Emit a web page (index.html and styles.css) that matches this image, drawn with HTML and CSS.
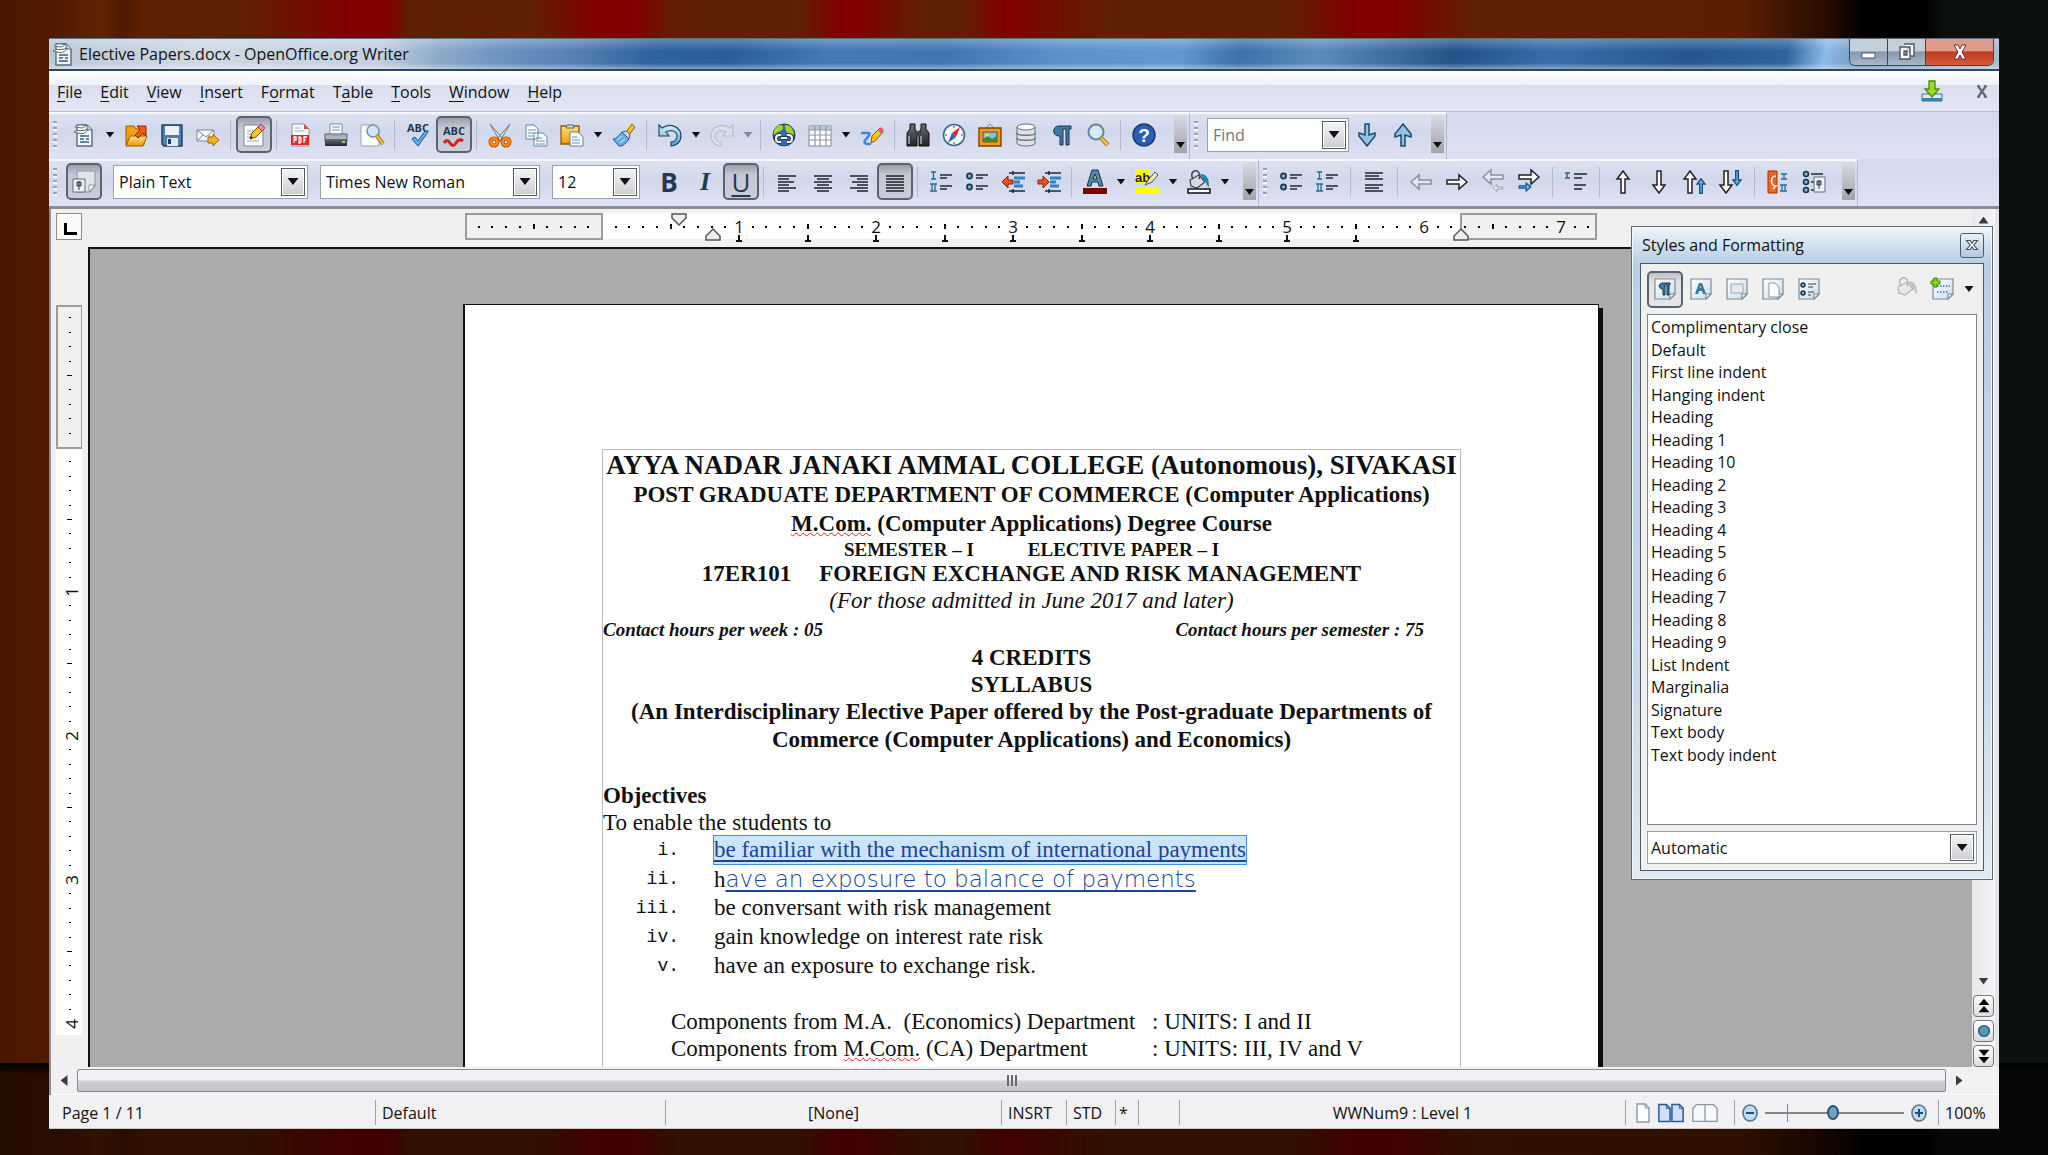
FILE: index.html
```html
<!DOCTYPE html>
<html lang="en">
<head>
    <meta charset="UTF-8">
    <meta name="viewport" content="width=device-width, initial-scale=1.0">
    <title>Elective Papers.docx - OpenOffice.org Writer</title>
    <link rel="stylesheet" href="styles.css">
</head>
<body>
    <!-- Shared icons and gradients -->
    <svg class="sprite" aria-hidden="true">
        <defs>
            <linearGradient id="gBlue" x1="0" y1="0" x2="0" y2="1"><stop offset="0" stop-color="#d8eefa"/><stop offset="1" stop-color="#5a9ccc"/></linearGradient>
            <linearGradient id="gGold" x1="0" y1="0" x2="0" y2="1"><stop offset="0" stop-color="#ffe27a"/><stop offset="1" stop-color="#f0980c"/></linearGradient>
            <linearGradient id="gPaper" x1="0" y1="0" x2="1" y2="1"><stop offset="0" stop-color="#fff"/><stop offset="1" stop-color="#c9dbe8"/></linearGradient>
            <linearGradient id="gDark" x1="0" y1="0" x2="0" y2="1"><stop offset="0" stop-color="#6b6f75"/><stop offset="1" stop-color="#22262b"/></linearGradient>
        </defs>
        <symbol id="i-writer" viewBox="0 0 24 24">
            <path d="M5 2h10l5 5v16H5z" fill="#f3f7fa" stroke="#566b7c" stroke-width="1.4"/>
            <path d="M15 2v5h5" fill="#cfdbe4" stroke="#566b7c"/>
            <path d="M3 4c4-4 7-1 11-2-3 5-7 2-11 2zM2 9c4-3 8 0 14-3-3 7-9 4-14 3z" fill="#fff" stroke="#56636e"/>
            <path d="M8 13h9M8 16h4M8 19h9M14 16h3" stroke="#2c5f8e" stroke-width="1.6"/>
        </symbol>
        <symbol id="i-bullets" viewBox="0 0 24 24">
            <circle cx="4.500" cy="6" r="2.600" fill="#7db0cf" stroke="#16384f" stroke-width="1.6"/>
            <circle cx="4.500" cy="17" r="2.600" fill="#7db0cf" stroke="#16384f" stroke-width="1.6"/>
            <path d="M11 5h12M11 8h7M11 16h12M11 19h7" stroke="#1c2a38" stroke-width="1.5"/>
        </symbol>
        <symbol id="i-numbers" viewBox="0 0 24 24">
            <path d="M2 2h5M2 9h5M4.500 2v7M1 14h7M1 21h7M3 14v7M6 14v7" stroke="#2c6a94" stroke-width="1.3"/>
            <path d="M11 5h12M11 8h7M11 16h12M11 19h7" stroke="#1c2a38" stroke-width="1.5"/>
        </symbol>
        <symbol id="i-paint" viewBox="0 0 24 24">
            <path d="M3 10l9-5 6 7-8 6-6-2z" fill="#d7dbe0" stroke="#3f4850" stroke-width="1.3"/>
            <path d="M6 9c-3-5 0-9 4-8 3 1 3 5 2 8" fill="none" stroke="#3f4850" stroke-width="1.5"/>
            <path d="M13 4c8 0 9 6 9 13-3-1-2-5-5-7z" fill="#1f83b8"/>
        </symbol>
        <symbol id="i-page" viewBox="0 0 24 24">
            <path d="M2 2h20v15l-5 5H2z" fill="url(#gPaper)" stroke="#7d8c9a" stroke-width="1.2"/>
            <path d="M22 17h-5v5z" fill="#fff" stroke="#7d8c9a" stroke-width="1.2"/>
        </symbol>
        <symbol id="i-left" viewBox="0 0 24 24"><path d="M2 12l8-7v5h12v4H10v5z"/></symbol>
        <symbol id="i-right" viewBox="0 0 24 24"><path d="M22 12l-8-7v5H2v4h12v5z"/></symbol>
        <symbol id="i-up" viewBox="0 0 24 24"><path d="M12 1l6 8h-4v14h-4V9H6z"/></symbol>
        <symbol id="i-down" viewBox="0 0 24 24"><path d="M12 23l6-8h-4V1h-4v14H6z"/></symbol>
        <symbol id="i-find" viewBox="0 0 24 24"><path d="M12 1l8 10v3l-6-2v11h-4V12l-6 2v-3z"/></symbol>
    </svg>

    <div class="window">
        <header class="titlebar">
            <svg class="icon"><use href="#i-writer"/></svg>
            <h1>Elective Papers.docx - OpenOffice.org Writer</h1>
            <div class="window-buttons">
                <button class="win-btn" aria-label="Minimize"><svg viewBox="0 0 24 20"><rect x="5" y="11" width="13" height="5" fill="#fff" stroke="#4c586a"/></svg></button>
                <button class="win-btn" aria-label="Restore"><svg viewBox="0 0 24 20"><path d="M9 2h10v12h-3M5 5h10v12H5zM9 9h3v4H9z" fill="#fff" stroke="#4c586a" stroke-width="1.4" fill-rule="evenodd"/></svg></button>
                <button class="win-btn win-close" aria-label="Close"><svg viewBox="0 0 24 20"><path d="M6 3h4l2 4 2-4h4l-4 7 4 7h-4l-2-4-2 4H6l4-7z" fill="#fff" stroke="#6b3030"/></svg></button>
            </div>
        </header>

        <nav class="menubar">
            <a href="#"><u>F</u>ile</a>
            <a href="#"><u>E</u>dit</a>
            <a href="#"><u>V</u>iew</a>
            <a href="#"><u>I</u>nsert</a>
            <a href="#">F<u>o</u>rmat</a>
            <a href="#">T<u>a</u>ble</a>
            <a href="#"><u>T</u>ools</a>
            <a href="#"><u>W</u>indow</a>
            <a href="#"><u>H</u>elp</a>
            <button class="menu-icon update" aria-label="Update"><svg class="icon" viewBox="0 0 24 24"><path d="M2 14h20v7H2z" fill="#dcecf8" stroke="#3d6d9c"/><path d="M2 18h20v3H2z" fill="#3d7fb4"/><path d="M9 1h6v8h4l-7 8-7-8h4z" fill="#9bdc1c" stroke="#4b8c0a" stroke-width="1.3"/></svg></button>
            <button class="menu-icon" aria-label="Close document"><svg class="icon" viewBox="0 0 24 24"><path d="M8 6l8 11M16 6L8 17" stroke="#5d6a80" stroke-width="2.2"/><path d="M7 6h3M14 6h3M7 17h3M14 17h3" stroke="#5d6a80" stroke-width="1.5"/></svg></button>
        </nav>

        <div class="toolbar-row">
            <div class="toolbar main-bar">
                <span class="grip"></span>
                <button class="tool" aria-label="New"><svg class="icon"><use href="#i-writer"/></svg></button>
                <button class="drop" aria-label="New options"></button>
                <button class="tool" aria-label="Open"><svg class="icon" viewBox="0 0 24 24"><path d="M2 3h8l2 3h8v16H2z" fill="#f0a010" stroke="#9c5a00"/><path d="M2 23l4-10h17l-4 10z" fill="url(#gGold)" stroke="#9c5a00"/><path d="M11 12l5-5-3-4h9v10l-3-3-5 5z" fill="#f4581c" stroke="#8c2400"/></svg></button>
                <button class="tool" aria-label="Save"><svg class="icon" viewBox="0 0 24 24"><path d="M2 2h20v21H4l-2-2z" fill="#4a7fae" stroke="#1c3e60" stroke-width="1.4"/><path d="M5 3h14v9H5z" fill="#eef4f9"/><path d="M7 15h11v8H7z" fill="#e4e9ee"/><path d="M8 16h3v5H8z" fill="#1c3e60"/></svg></button>
                <button class="tool" aria-label="E-mail"><svg class="icon" viewBox="0 0 24 24"><path d="M1 7h17v11H1z" fill="#f4f7fa" stroke="#7c8893"/><path d="M1 7l9 7 8-7M1 18l6-6M18 18l-5-6" fill="none" stroke="#7c8893"/><path d="M12 14h5v-3l6 6-6 6v-3h-5z" fill="#f6b21c" stroke="#a86a00"/></svg></button>
                <span class="sep"></span>
                <button class="tool pressed" aria-label="Edit file"><svg class="icon" viewBox="0 0 24 24"><path d="M2 2h15l4 4v17H2z" fill="#fafbfc" stroke="#7c8893"/><path d="M5 8h9M5 11h7M5 14h6M5 18h12" stroke="#9aa6b0"/><path d="M8 16l2-6 8-8 4 4-8 8z" fill="#fcc51c" stroke="#6e5200"/><path d="M16 4l3-3 4 4-3 3z" fill="#f08aa0" stroke="#9c4058"/><path d="M8 16l1-3 2 2z" fill="#222"/></svg></button>
                <span class="sep"></span>
                <button class="tool" aria-label="Export as PDF"><svg class="icon" viewBox="0 0 24 24"><path d="M4 1h12l5 5v17H4z" fill="#f5f8fa" stroke="#8895a0"/><path d="M16 1v5h5z" fill="#e0484c"/><path d="M7 5h6M7 8h9" stroke="#a8b4be"/><path d="M3 12h18v10H3z" fill="#e02828"/><path d="M6 20v-6h2v3H6M11 14v6h1l1-1v-4l-1-1zM16 20v-6h3M16 17h2" fill="none" stroke="#fff" stroke-width="1.3"/></svg></button>
                <button class="tool" aria-label="Print"><svg class="icon" viewBox="0 0 24 24"><path d="M6 1h12v11H6z" fill="#fff" stroke="#7c8893"/><path d="M8 4h8M8 7h8" stroke="#4a9cc8"/><path d="M1 11h22v8H1z" fill="#aeb6bd" stroke="#59636c"/><path d="M1 16h22v7H1z" fill="url(#gDark)"/><path d="M7 10h10v3H7z" fill="#8aa0b0"/><path d="M18 19h3" stroke="#8fe04c" stroke-width="2"/></svg></button>
                <button class="tool" aria-label="Page preview"><svg class="icon" viewBox="0 0 24 24"><path d="M1 2h14l4 4v17H1z" fill="#fafbfc" stroke="#9aa6b0"/><circle cx="13" cy="8" r="6" fill="#cfe6f5" stroke="#7794a8" stroke-width="1.5"/><path d="M17 13l6 8" stroke="#b07a10" stroke-width="4"/><path d="M17 13l6 8" stroke="#f7c544" stroke-width="2"/></svg></button>
                <span class="sep"></span>
                <button class="tool" aria-label="Spelling and grammar"><svg class="icon" viewBox="0 0 24 24"><text class="abc" x="12" y="9">ABC</text><path d="M6 16l6 7L22 9l-3-1-7 10-3-4z" fill="#58b4f0" stroke="#14548c"/></svg></button>
                <button class="tool pressed" aria-label="AutoSpellcheck"><svg class="icon" viewBox="0 0 24 24"><text class="abc" x="12" y="12">ABC</text><path d="M2 20q3-5 6 0t6 0 7-2" fill="none" stroke="#d8201c" stroke-width="3"/></svg></button>
                <span class="sep"></span>
                <button class="tool" aria-label="Cut"><svg class="icon" viewBox="0 0 24 24"><path d="M2 1l13 15-3 2zM22 1L9 16l3 2z" fill="#e6eaee" stroke="#6b7680"/><circle cx="6" cy="19" r="3.500" fill="none" stroke="#b04c00" stroke-width="4"/><circle cx="18" cy="19" r="3.500" fill="none" stroke="#b04c00" stroke-width="4"/><circle cx="6" cy="19" r="3.500" fill="none" stroke="#fb8c14" stroke-width="2.400"/><circle cx="18" cy="19" r="3.500" fill="none" stroke="#fb8c14" stroke-width="2.400"/></svg></button>
                <button class="tool" aria-label="Copy"><svg class="icon" viewBox="0 0 24 24"><path d="M2 2h8l4 4v10H2zM10 10h9l4 4v9H10z" fill="#f7fafc" stroke="#6f8494"/><path d="M4 7h8M4 10h6M4 13h5M12 15h6M12 18h9M12 21h9" stroke="#5c9cc8"/></svg></button>
                <button class="tool" aria-label="Paste"><svg class="icon" viewBox="0 0 24 24"><path d="M1 3h18v18H1z" fill="url(#gGold)" stroke="#8a5a08" stroke-width="1.3"/><path d="M6 5l1-3h6l1 3z" fill="#d6dbe0" stroke="#5c666f"/><path d="M10 9h8l5 5v9H10z" fill="#f7fafc" stroke="#6f8494"/><path d="M12 14h5M12 17h8M12 20h8" stroke="#5c9cc8"/></svg></button>
                <button class="drop" aria-label="Paste options"></button>
                <button class="tool" aria-label="Format paintbrush"><svg class="icon" viewBox="0 0 24 24"><path d="M14 9l6-8 3 3-6 8z" fill="#f8be2c" stroke="#8c6200"/><path d="M10 9l5-1 3 4-1 4z" fill="#d0d6dc" stroke="#58646e"/><path d="M1 16c4 0 6-4 9-7l7 7c-2 3-6 8-10 7z" fill="#66aeea" stroke="#1c5a94"/><path d="M5 17l5-4M8 20l5-4" stroke="#d4ecff"/></svg></button>
                <span class="sep"></span>
                <button class="tool" aria-label="Undo"><svg class="icon" viewBox="0 0 24 24"><path d="M1 2l3 3C12-1 23 4 23 13c0 6-5 10-10 10v-4c4 0 6-3 6-6 0-5-6-7-11-4l3 4H1z" fill="url(#gBlue)" stroke="#1d4a6c" stroke-width="1.2"/></svg></button>
                <button class="drop" aria-label="Undo options"></button>
                <button class="tool faded" aria-label="Redo" disabled><svg class="icon" viewBox="0 0 24 24"><path d="M23 2l-3 3C12-1 1 4 1 13c0 6 5 10 10 10v-4c-4 0-6-3-6-6 0-5 6-7 11-4l-3 4h10z" fill="#e4e8f0" stroke="#8f98a4" stroke-width="1.2"/></svg></button>
                <button class="drop faded" aria-label="Redo options" disabled></button>
                <span class="sep"></span>
                <button class="tool" aria-label="Hyperlink"><svg class="icon" viewBox="0 0 24 24"><circle cx="12" cy="12" r="11" fill="#2c6cb0" stroke="#1c3c60"/><path d="M3 6c5-7 8-4 8-1s-6 3-9 7c-1-3 0-4 1-6zM13 2c6 0 8 4 9 9-5 2-9-2-9-9z" fill="#a8d428"/><path d="M9 12H7c-4 0-4 7 0 7h2M15 12h2c4 0 4 7 0 7h-2M9 15h6" fill="none" stroke="#334" stroke-width="4"/><path d="M9 12H7c-4 0-4 7 0 7h2M15 12h2c4 0 4 7 0 7h-2M9 15h6" fill="none" stroke="#f4f6f8" stroke-width="2"/></svg></button>
                <button class="tool" aria-label="Table"><svg class="icon" viewBox="0 0 24 24"><path d="M1 3h22v20H1z" fill="#fff" stroke="#7d8994"/><path d="M1 3h22v4H1z" fill="#b8c8d4"/><path d="M1 7h22M1 12h22M1 17h22M7 3v20M12 3v20M18 3v20" stroke="#8c98a4" stroke-width="1.2"/></svg></button>
                <button class="drop" aria-label="Table options"></button>
                <button class="tool" aria-label="Show draw functions"><svg class="icon" viewBox="0 0 24 24"><path d="M1 10h7c3 0 1 3-1 5s-5 6 1 6h3" fill="none" stroke="#3c88e0" stroke-width="2.500"/><path d="M11 20l1-7 8-8 3 4-8 9z" fill="#fcc51c" stroke="#7c5c00"/><path d="M18 7l3-3 3 3-3 4z" fill="#e85c70"/></svg></button>
                <span class="sep"></span>
                <button class="tool" aria-label="Find and replace"><svg class="icon" viewBox="0 0 24 24"><path d="M4 1h5v5l2 3v14H1V10l3-4zM15 1h5v5l3 4v13H13V9l2-3z" fill="url(#gDark)" stroke="#111"/><path d="M9 8h6v6H9z" fill="#444"/><path d="M3 13v8M15 13v8" stroke="#b4b9bf" stroke-width="1.4"/></svg></button>
                <button class="tool" aria-label="Navigator"><svg class="icon" viewBox="0 0 24 24"><circle cx="12" cy="12" r="10.500" fill="#f2f7fc" stroke="#3c6894" stroke-width="1.6"/><path d="M18 4l-4 10-4-4z" fill="#e02820"/><path d="M6 20l4-10 4 4z" fill="#2860c0"/><path d="M12 3v2M12 19v2M3 12h2M19 12h2" stroke="#456"/></svg></button>
                <button class="tool" aria-label="Gallery"><svg class="icon" viewBox="0 0 24 24"><path d="M8 5l4-4 4 4" fill="none" stroke="#888"/><path d="M1 5h22v18H1z" fill="#f39a1c" stroke="#7c4400" stroke-width="1.4"/><path d="M5 9h14v10H5z" fill="#7cc0f0" stroke="#7c4400"/><path d="M5 19v-3l5-3 4 3 5-3v6z" fill="#3c8c20"/><circle cx="9" cy="12" r="1.500" fill="#ffe040"/></svg></button>
                <button class="tool" aria-label="Data sources"><svg class="icon" viewBox="0 0 24 24"><path d="M3 4v16c0 4 18 4 18 0V4z" fill="#dfe3e6" stroke="#636d76"/><ellipse cx="12" cy="4" rx="9" ry="3" fill="#fff" stroke="#636d76"/><path d="M3 10c0 3 18 3 18 0M3 15c0 3 18 3 18 0" fill="none" stroke="#636d76" stroke-width="1.500"/></svg></button>
                <button class="tool" aria-label="Nonprinting characters"><svg class="icon" viewBox="0 0 24 24"><path d="M21 3H9C2 3 2 13 9 13h1v9h3V6h3v16h3V6h2z" fill="#3f7aa4" stroke="#16364e"/></svg></button>
                <button class="tool" aria-label="Zoom"><svg class="icon" viewBox="0 0 24 24"><circle cx="10" cy="9" r="7.500" fill="#d4ecfa" stroke="#6c8496" stroke-width="2"/><path d="M15 15l7 7" stroke="#9c6c10" stroke-width="4.500"/><path d="M15 15l7 7" stroke="#f7c544" stroke-width="2.500"/></svg></button>
                <span class="sep"></span>
                <button class="tool" aria-label="Help"><svg class="icon" viewBox="0 0 24 24"><circle cx="12" cy="12" r="11" fill="#2c5cb4" stroke="#1a3870" stroke-width="1.4"/><text class="help-mark" x="12" y="19">?</text></svg></button>
                <button class="overflow" aria-label="More"></button>
            </div>
            <div class="toolbar find-bar">
                <span class="grip"></span>
                <div class="combo find"><input type="text" aria-label="Find" placeholder="Find"><span class="combo-arrow"></span></div>
                <button class="tool" aria-label="Find next"><svg class="icon blue"><use class="flip" href="#i-find"/></svg></button>
                <button class="tool" aria-label="Find previous"><svg class="icon blue"><use href="#i-find"/></svg></button>
                <button class="overflow" aria-label="More"></button>
            </div>
        </div>

        <div class="toolbar-row">
            <div class="toolbar format-bar">
                <span class="grip"></span>
                <button class="tool pressed" aria-label="Styles and formatting"><svg class="icon" viewBox="0 0 24 24"><path d="M5 1h18v15l-5 6H5z" fill="#dce6ee" stroke="#8896a2"/><path d="M23 15h-6v7z" fill="#fff" stroke="#8896a2"/><path d="M1 9h12v13H1z" fill="#eef2f5" stroke="#5f6c78"/><path d="M7 11v9M5 12h4v4H5z" fill="#aab" stroke="#333d47"/></svg></button>
                <div class="combo style"><select aria-label="Apply style"><option>Plain Text</option></select><span class="combo-arrow"></span></div>
                <div class="combo font"><select aria-label="Font name"><option>Times New Roman</option></select><span class="combo-arrow"></span></div>
                <div class="combo size"><select aria-label="Font size"><option>12</option></select><span class="combo-arrow"></span></div>
                <button class="tool letter bold" aria-label="Bold">B</button>
                <button class="tool letter italic" aria-label="Italic">I</button>
                <button class="tool letter pressed" aria-label="Underline"><u>U</u></button>
                <span class="sep"></span>
                <button class="tool" aria-label="Align left"><svg class="icon lines" viewBox="0 0 24 24"><path d="M3 6h18M3 9h11M3 12h16M3 15h11M3 18h18M3 21h11"/></svg></button>
                <button class="tool" aria-label="Centered"><svg class="icon lines" viewBox="0 0 24 24"><path d="M3 6h18M6 9h12M3 12h18M6 15h12M3 18h18M6 21h12"/></svg></button>
                <button class="tool" aria-label="Align right"><svg class="icon lines" viewBox="0 0 24 24"><path d="M3 6h18M10 9h11M5 12h16M10 15h11M3 18h18M10 21h11"/></svg></button>
                <button class="tool pressed" aria-label="Justified"><svg class="icon lines" viewBox="0 0 24 24"><path d="M3 6h18M3 9h18M3 12h18M3 15h18M3 18h18M3 21h18"/></svg></button>
                <span class="sep"></span>
                <button class="tool" aria-label="Numbering"><svg class="icon"><use href="#i-numbers"/></svg></button>
                <button class="tool" aria-label="Bullets"><svg class="icon"><use href="#i-bullets"/></svg></button>
                <button class="tool" aria-label="Decrease indent"><svg class="icon" viewBox="0 0 24 24"><path d="M8 3h16M8 21h16M12 1v4M12 19v4" stroke="#1c2a38" stroke-width="1.500"/><path d="M13 8h11M13 12h6M13 16h9" stroke="#2c84cc" stroke-width="3"/><path d="M1 12l6-6v4h5v4H7v4z" fill="#f0501c" stroke="#8c2000"/></svg></button>
                <button class="tool" aria-label="Increase indent"><svg class="icon" viewBox="0 0 24 24"><path d="M8 3h16M8 21h16M12 1v4M12 19v4" stroke="#1c2a38" stroke-width="1.500"/><path d="M13 8h11M13 12h6M13 16h9" stroke="#2c84cc" stroke-width="3"/><path d="M12 12L6 6v4H1v4h5v4z" fill="#f0501c" stroke="#8c2000"/></svg></button>
                <span class="sep"></span>
                <button class="tool" aria-label="Font color"><svg class="icon" viewBox="0 0 24 24"><path d="M4 16l5-16h6l5 16h-4l-1-4H9l-1 4zM10 9h4l-2-5z" fill="#5488a8" stroke="#183448" fill-rule="evenodd"/><path d="M0 18h24v6H0z" fill="#800000"/></svg></button>
                <button class="drop" aria-label="Font color options"></button>
                <button class="tool" aria-label="Highlighting"><svg class="icon" viewBox="0 0 24 24"><path d="M0 0h15v14H0z" fill="#ff0"/><text class="ab" x="0" y="12">ab</text><path d="M10 15l4-6 6-7 3 3-6 7z" fill="#e8e4d0" stroke="#5c5440"/><path d="M0 18h24v6H0z" fill="#ff0"/></svg></button>
                <button class="drop" aria-label="Highlighting options"></button>
                <button class="tool" aria-label="Background color"><svg class="icon" viewBox="0 0 24 24"><use href="#i-paint" width="24" height="24"/><path d="M1 19h22v4H1z" fill="#fff" stroke="#111" stroke-width="1.5"/></svg></button>
                <button class="drop" aria-label="Background options"></button>
                <button class="overflow" aria-label="More"></button>
            </div>
            <div class="toolbar list-bar">
                <span class="grip"></span>
                <button class="tool" aria-label="Bullets on/off"><svg class="icon"><use href="#i-bullets"/></svg></button>
                <button class="tool" aria-label="Numbering on/off"><svg class="icon"><use href="#i-numbers"/></svg></button>
                <span class="sep"></span>
                <button class="tool" aria-label="Numbering off"><svg class="icon lines" viewBox="0 0 24 24"><path d="M3 3h18M3 6h14M3 9h18M3 15h18M3 18h14M3 21h18"/></svg></button>
                <span class="sep"></span>
                <button class="tool faded" aria-label="Promote one level" disabled><svg class="icon white"><use href="#i-left"/></svg></button>
                <button class="tool" aria-label="Demote one level"><svg class="icon white"><use href="#i-right"/></svg></button>
                <button class="tool faded" aria-label="Promote with subpoints" disabled><svg class="icon white" viewBox="0 0 24 24"><use href="#i-left" y="-5" width="24" height="24"/><use href="#i-left" x="10" y="12" width="14" height="12"/></svg></button>
                <button class="tool" aria-label="Demote with subpoints"><svg class="icon white" viewBox="0 0 24 24"><use href="#i-right" y="-5" width="24" height="24"/><use class="sub" href="#i-right" x="1" y="10" width="14" height="14"/></svg></button>
                <span class="sep"></span>
                <button class="tool" aria-label="Insert unnumbered entry"><svg class="icon lines" viewBox="0 0 24 24"><path d="M1 3h5M3 3v5M1 8h5" stroke="#2c6a94"/><path d="M10 4h13M10 8h8M10 15h12M10 19h8"/></svg></button>
                <span class="sep"></span>
                <button class="tool" aria-label="Move up"><svg class="icon white"><use href="#i-up"/></svg></button>
                <button class="tool" aria-label="Move down"><svg class="icon white"><use href="#i-down"/></svg></button>
                <button class="tool" aria-label="Move up with subpoints"><svg class="icon white" viewBox="0 0 24 24"><use href="#i-up" x="-5" width="24" height="24"/><use class="sub" href="#i-up" x="10" y="8" width="16" height="16"/></svg></button>
                <button class="tool" aria-label="Move down with subpoints"><svg class="icon white" viewBox="0 0 24 24"><use href="#i-down" x="-5" width="24" height="24"/><use class="sub" href="#i-down" x="10" y="0" width="16" height="16"/></svg></button>
                <span class="sep"></span>
                <button class="tool" aria-label="Restart numbering"><svg class="icon" viewBox="0 0 24 24"><path d="M2 1h9v22H2z" fill="#f0641c" stroke="#a83000"/><path d="M10 6c-6 0-6 10 0 10l-3 3" fill="none" stroke="#fff" stroke-width="1.500"/><path d="M15 4h6M18 4v5M15 9h6M14 15h7M14 21h7M16 15v6M19 15v6" stroke="#2c6a94" stroke-width="1.3"/></svg></button>
                <button class="tool" aria-label="Bullets and numbering"><svg class="icon" viewBox="0 0 24 24"><circle cx="4" cy="4" r="2.500" fill="#7db0cf" stroke="#16384f" stroke-width="1.500"/><circle cx="4" cy="12" r="2.500" fill="#7db0cf" stroke="#16384f" stroke-width="1.500"/><circle cx="4" cy="20" r="2.500" fill="#7db0cf" stroke="#16384f" stroke-width="1.500"/><path d="M9 4h12M9 12h3M9 20h3" stroke="#1c2a38" stroke-width="1.5"/><path d="M12 7h11v15H12z" fill="#eef2f5" stroke="#5f6c78"/><path d="M17 10v9M15 11h4v4h-4z" fill="#aab" stroke="#333d47"/></svg></button>
                <button class="overflow" aria-label="More"></button>
            </div>
        </div>

        <main class="workspace">
            <div class="ruler-row">
                <button class="tab-type" aria-label="Tab type"></button>
                <div class="ruler-holder">
                    <svg class="ruler-h" id="rulerH"></svg>
                </div>
            </div>
            <div class="side-ruler">
                <svg class="ruler-v" id="rulerV"></svg>
            </div>
            <div class="canvas">
                <article class="page">
                    <div class="text-frame">
                        <h2 class="college">AYYA NADAR JANAKI AMMAL COLLEGE (Autonomous), SIVAKASI</h2>
                        <p class="head tall">POST GRADUATE DEPARTMENT OF COMMERCE (Computer Applications)</p>
                        <p class="head"><span class="misspelt">M.Com.</span> (Computer Applications) Degree Course</p>
                        <p class="semester"><span>SEMESTER – I</span><span>ELECTIVE PAPER – I</span></p>
                        <p class="head course"><span>17ER101</span><span>FOREIGN EXCHANGE AND RISK MANAGEMENT</span></p>
                        <p class="admitted">(For those admitted in June 2017 and later)</p>
                        <p class="hours"><span>Contact hours per week : 05</span><span>Contact hours per semester : 75</span></p>
                        <p class="head short">4 CREDITS</p>
                        <p class="head short">SYLLABUS</p>
                        <p class="head">(An Interdisciplinary Elective Paper offered by the Post-graduate Departments of Commerce (Computer Applications) and Economics)</p>
                        <h3>Objectives</h3>
                        <p class="body-text">To enable the students to</p>
                        <ol class="objectives">
                            <li><span class="num">i.</span><a class="link selected" href="#">be familiar with the mechanism of international payments</a></li>
                            <li><span class="num">ii.</span><span>h<a class="link wide" href="#">ave an exposure to balance of payments</a></span></li>
                            <li><span class="num">iii.</span><span>be conversant with risk management</span></li>
                            <li><span class="num">iv.</span><span>gain knowledge on interest rate risk</span></li>
                            <li><span class="num">v.</span><span>have an exposure to exchange risk.</span></li>
                        </ol>
                        <div class="components">
                            <p>Components from M.A. &nbsp;(Economics) Department</p><p>: UNITS: I and II</p>
                            <p>Components from <span class="misspelt">M.Com.</span> (CA) Department</p><p>: UNITS: III, IV and V</p>
                        </div>
                    </div>
                </article>
            </div>
            <div class="scroll-v">
                <button class="arrow up" aria-label="Scroll up"></button>
                <div class="scroll-space"></div>
                <button class="arrow down" aria-label="Scroll down"></button>
                <button class="nav-btn" aria-label="Previous page"><svg viewBox="0 0 20 20"><path d="M10 2l6 7H4zM10 10l6 7H4z"/></svg></button>
                <button class="nav-btn" aria-label="Navigation"><svg viewBox="0 0 20 20"><circle cx="10" cy="10" r="6" fill="#5a94bc" stroke="#24506e" stroke-width="1.5"/></svg></button>
                <button class="nav-btn" aria-label="Next page"><svg viewBox="0 0 20 20"><path d="M10 10l6-7H4zM10 18l6-7H4z"/></svg></button>
            </div>
            <div class="scroll-h">
                <button class="arrow left" aria-label="Scroll left"></button>
                <div class="thumb"><span></span></div>
                <button class="arrow right" aria-label="Scroll right"></button>
            </div>

            <aside class="styles-panel">
                <div class="panel-title">
                    <h2>Styles and Formatting</h2>
                    <button class="panel-close" aria-label="Close panel"><svg viewBox="0 0 20 20"><path d="M4 5h4l2 3 2-3h4l-4 5 4 5h-4l-2-3-2 3H4l4-5z" fill="#fff" stroke="#444f5c" stroke-width="1.3"/></svg></button>
                </div>
                <div class="panel-body">
                    <div class="panel-tools">
                        <button class="tool pressed" aria-label="Paragraph styles"><svg class="icon" viewBox="0 0 24 24"><use href="#i-page"/><path d="M17 6h-7c-5 0-5 6 0 6v6h2V8h2v10h2V8h1z" fill="#3f7aa4" stroke="#16364e"/></svg></button>
                        <button class="tool" aria-label="Character styles"><svg class="icon" viewBox="0 0 24 24"><use href="#i-page"/><path d="M6 17l4-11h3l4 11h-3l-1-3h-3l-1 3zM11 11h1l-1-3z" fill="#3878a4" fill-rule="evenodd"/></svg></button>
                        <button class="tool" aria-label="Frame styles"><svg class="icon" viewBox="0 0 24 24"><use href="#i-page"/><path d="M6 7h12v9H6z" fill="#e4eaf0" stroke="#9aa8bc"/></svg></button>
                        <button class="tool" aria-label="Page styles"><svg class="icon" viewBox="0 0 24 24"><use href="#i-page"/><path d="M8 6h6l4 4v10H8z" fill="#fff" stroke="#8a97a3"/></svg></button>
                        <button class="tool" aria-label="List styles"><svg class="icon" viewBox="0 0 24 24"><use href="#i-page"/><circle cx="6" cy="8" r="2" fill="#7db0cf" stroke="#16384f" stroke-width="1.5"/><circle cx="6" cy="16" r="2" fill="#7db0cf" stroke="#16384f" stroke-width="1.5"/><path d="M11 7h8M11 10h5M11 15h6M11 18h3" stroke="#333f4b"/></svg></button>
                        <span class="spacer"></span>
                        <button class="tool gray" aria-label="Fill format mode" disabled><svg class="icon"><use href="#i-paint"/></svg></button>
                        <button class="tool" aria-label="New style from selection"><svg class="icon" viewBox="0 0 24 24"><use href="#i-page"/><path d="M6 9h13M6 15h11" stroke="#3c70a8" stroke-width="1.5" stroke-dasharray="1.500 1.500"/><path d="M3 1h3v3h3v3H6v3H3V7H0V4h3z" fill="#8ce020" stroke="#3c8400"/></svg></button>
                        <button class="drop" aria-label="New style options"></button>
                    </div>
                    <div class="style-list">
                        <ul>
                            <li>Complimentary close</li>
                            <li>Default</li>
                            <li>First line indent</li>
                            <li>Hanging indent</li>
                            <li>Heading</li>
                            <li>Heading 1</li>
                            <li>Heading 10</li>
                            <li>Heading 2</li>
                            <li>Heading 3</li>
                            <li>Heading 4</li>
                            <li>Heading 5</li>
                            <li>Heading 6</li>
                            <li>Heading 7</li>
                            <li>Heading 8</li>
                            <li>Heading 9</li>
                            <li>List Indent</li>
                            <li>Marginalia</li>
                            <li>Signature</li>
                            <li>Text body</li>
                            <li>Text body indent</li>
                        </ul>
                    </div>
                    <div class="combo filter"><select aria-label="Style filter"><option>Automatic</option></select><span class="combo-arrow"></span></div>
                </div>
            </aside>
        </main>

        <footer class="statusbar">
            <span>Page 1 / 11</span>
            <span>Default</span>
            <span class="center">[None]</span>
            <span>INSRT</span>
            <span>STD</span>
            <span class="modified">*</span>
            <span></span>
            <span class="center">WWNum9 : Level 1</span>
            <span class="views">
                <button aria-label="Single page"><svg viewBox="0 0 16 20"><path d="M2 1h8l4 4v14H2z" fill="#fff" stroke="#8d98a3" stroke-width="1.4"/><path d="M10 1v4h4" fill="none" stroke="#8d98a3"/></svg></button>
                <button aria-label="Several pages"><svg class="double" viewBox="0 0 30 20"><path d="M2 1h8l4 4v14H2zM16 1h8l4 4v14H16z" fill="#cfe0f8" stroke="#2858a0" stroke-width="1.6"/><path d="M10 1v4h4M24 1v4h4" fill="none" stroke="#2858a0"/></svg></button>
                <button aria-label="Book mode"><svg class="double" viewBox="0 0 30 20"><path d="M6 1h18l4 4v14H2V5zM15 1v18" fill="#f6f8fa" stroke="#8d98a3" stroke-width="1.4"/></svg></button>
            </span>
            <span class="zoom">
                <button class="round" aria-label="Zoom out"><svg viewBox="0 0 18 20"><ellipse cx="9" cy="10" rx="7" ry="8" fill="#bfdcf0" stroke="#5c7486" stroke-width="1.6"/><path d="M5 10h8" stroke="#1c4c7c" stroke-width="2"/></svg></button>
                <input type="range" min="0" max="100" value="49" aria-label="Zoom">
                <button class="round" aria-label="Zoom in"><svg viewBox="0 0 18 20"><ellipse cx="9" cy="10" rx="7" ry="8" fill="#bfdcf0" stroke="#5c7486" stroke-width="1.6"/><path d="M5 10h8M9 6v8" stroke="#1c4c7c" stroke-width="2"/></svg></button>
            </span>
            <span>100%</span>
        </footer>
    </div>

    <script>
        const NS = 'http://www.w3.org/2000/svg';

        function add(svg, name, attrs, text) {
            const el = document.createElementNS(NS, name);
            for (const key in attrs) {
                el.setAttribute(key, attrs[key]);
            }
            if (text !== undefined) el.textContent = text;
            svg.appendChild(el);
        }

        // inch marks, half inch ticks and dots in between
        function drawMarks(svg, origin, inch, from, to, vertical) {
            for (let i = from; i <= to; i++) {
                const pos = Math.round(origin + i * inch / 10);
                if (i === 0) continue;
                if (i > 0 && i % 10 === 0) {
                    const attrs = vertical
                        ? { transform: 'translate(22 ' + pos + ') rotate(-90)' }
                        : { x: pos, y: 20 };
                    add(svg, 'text', attrs, i / 10);
                } else {
                    const size = i % 5 === 0 ? 5 : 2;
                    const start = 14 - Math.round(size / 2);
                    add(svg, 'rect', vertical
                        ? { x: start, y: pos - 1, width: size, height: 1 }
                        : { x: pos - 1, y: start, width: 2, height: size });
                }
            }
        }

        const rulerH = document.getElementById('rulerH');
        add(rulerH, 'rect', { class: 'active', x: 137, y: 0, width: 859, height: 26 });
        add(rulerH, 'rect', { class: 'margin', x: 1, y: 1, width: 136, height: 25 });
        add(rulerH, 'rect', { class: 'margin', x: 996, y: 1, width: 135, height: 25 });
        drawMarks(rulerH, 137, 137, -9, 72, false);
        for (let i = 2; i <= 11; i++) {
            const x = Math.round(137 + i * 137 / 2);
            add(rulerH, 'path', { class: 'tab', d: 'M' + x + ' 22v6M' + (x - 3) + ' 28h6' });
        }
        add(rulerH, 'path', { class: 'indent', d: 'M207 1h14v4l-7 7-7-7z' });
        add(rulerH, 'path', { class: 'indent', d: 'M241 27h14v-4l-7-7-7 7z' });
        add(rulerH, 'path', { class: 'indent', d: 'M989 27h14v-4l-7-7-7 7z' });

        const rulerV = document.getElementById('rulerV');
        add(rulerV, 'rect', { class: 'active', x: 0, y: 142, width: 26, height: 588 });
        add(rulerV, 'rect', { class: 'margin', x: 1, y: 1, width: 25, height: 142 });
        drawMarks(rulerV, 143, 144, -9, 40, true);
    </script>
</body>
</html>
```

FILE: styles.css
```css
* {
    box-sizing: border-box;
}

body {
    margin: 0;
    height: 100vh;
    padding: 38px 49px 26px;
    display: flex;
    font-family: "Open Sans", "Noto Sans", sans-serif;
    font-size: 16px;
    color: #111;
    overflow: hidden;
    background:
        linear-gradient(transparent 92%, #000 92%, rgba(0, 0, 0, 0.5) 93%),
        linear-gradient(90deg, #4a1800 0%, #521a00 3%, #642200 5%, #4c1a00 6%, #602000 7%, #602000 12%, #820000 17%, #820000 19%, #602000 20%, #602000 26%, #820000 29%, #820000 31%, #602000 33%, #602000 39%, #820000 41%, #820000 42%, #602000 45%, #602000 47%, #820000 49%, #602000 54%, #602000 63%, #820000 66%, #820000 68%, #602000 72%, #5c1e00 85%, #2a0e00 89%, #000 91%, #000 94%, #0d1011 95%);
}

button {
    font-family: inherit;
    padding: 0;
    margin: 0;
    border: none;
    background: none;
    color: inherit;
}

h1, h2, h3, p, ul, ol {
    margin: 0;
    padding: 0;
    font-weight: normal;
    font-size: inherit;
    list-style: none;
}

.sprite {
    position: absolute;
    width: 0;
    height: 0;
}

.icon {
    width: 24px;
    height: 24px;
    display: block;
    overflow: visible;
}

.window {
    flex: 1;
    min-width: 0;
    min-height: 0;
    display: flex;
    flex-direction: column;
    background: #d6dbed;
}

/* Title bar */
.titlebar {
    height: 33px;
    flex: none;
    display: flex;
    align-items: center;
    gap: 4px;
    padding-left: 2px;
    border-top: 1px solid #5f6f80;
    border-bottom: 2px solid #2e4766;
    background:
        linear-gradient(rgba(255, 255, 255, 0.25), transparent 40%, transparent 80%, rgba(255, 255, 255, 0.4)),
        linear-gradient(100deg, #b9c8d8 0%, #cfd9e4 8%, #c2d0df 17%, #8fabc9 20%, #6f94c0 23%, #5580b4 27%, #2e629e 31%, #2c5f9a 35%, #4379b4 40%, #4076b0 46%, #5b92ca 52%, #6298ce 58%, #3c70a8 61%, #5b8cbc 65%, #24538a 72%, #3a6ca8 77%, #27578e 84%, #2f639c 89%, #8abae8 91%, #7393b5 93%, #a9bccf 100%);
}

.titlebar h1 {
    flex: 1;
    font-size: 16px;
}

.window-buttons {
    align-self: flex-start;
    display: flex;
    margin-right: 5px;
    border: 1px solid #35475e;
    border-top: none;
    border-radius: 0 0 6px 6px;
    overflow: hidden;
}

.win-btn {
    width: 38px;
    height: 26px;
    border-right: 1px solid #35475e;
    background: linear-gradient(#c4cfdc 45%, #8597ad 50%, #a9b9cb);
}

.win-btn svg {
    width: 24px;
    height: 20px;
    display: block;
    margin: auto;
}

.win-close {
    width: 67px;
    border-right: none;
    background: linear-gradient(#e09a8c 45%, #c03a20 50%, #d8583a);
}

/* Menu */
.menubar {
    height: 41px;
    flex: none;
    display: flex;
    align-items: center;
    gap: 18px;
    padding: 2px 5px 0 8px;
    background: linear-gradient(#fff, #f0f2fb 34%, #d9deef 36%, #e4e6f5);
    border-bottom: 1px solid #b9bfd0;
}

.menubar a {
    color: #111;
    text-decoration: none;
}

.menubar u {
    text-underline-offset: 3px;
}

.menu-icon.update {
    margin-left: auto;
    margin-right: 8px;
}

/* Toolbars */
.toolbar-row {
    display: flex;
    flex: none;
    height: 47px;
    background: linear-gradient(#d3daeb, #dfe2f4);
}

.toolbar {
    display: flex;
    align-items: center;
    height: 47px;
    padding: 0 0 4px 4px;
    border-top: 2px solid #f6f7fc;
    border-right: 1px solid #b4bac8;
    background: linear-gradient(#dde2f2, #d0d8ea 40%, #dfe2f4);
}

.grip {
    width: 4px;
    height: 28px;
    background: repeating-linear-gradient(#9aa2b4 0 2px, #f4f6fb 2px 4px, transparent 4px 6px);
}

.tool {
    width: 36px;
    height: 37px;
    display: flex;
    align-items: center;
    justify-content: center;
}

.tool.pressed {
    border: 2px solid #5d6270;
    border-radius: 5px;
    background: linear-gradient(#9a9fac, #c4c8d4 30%, #c9cdd9);
}

.sep {
    width: 1px;
    height: 30px;
    margin: 0 5px 0 4px;
    background: #b4bbcb;
}

.drop {
    width: 16px;
    height: 37px;
}

.drop::before,
.overflow::before {
    content: "";
    display: block;
    width: 9px;
    height: 6px;
    margin: 0 auto;
    background: #111;
    clip-path: polygon(0 0, 100% 0, 50% 100%);
}

.faded {
    opacity: 0.4;
}

.overflow {
    width: 13px;
    height: 37px;
    margin: 0 2px 0 10px;
    display: flex;
    align-items: flex-end;
    padding-bottom: 5px;
    background: linear-gradient(#d6d9e2, #a2a3a8);
}

.main-bar .grip {
    margin-right: 9px;
}

.main-bar .overflow {
    margin-left: 12px;
}

.find-bar .grip {
    margin-right: 9px;
}

.format-bar .grip {
    margin-right: 9px;
}

.list-bar .grip {
    margin-right: 6px;
}

.list-bar .sep {
    margin: 0 5px;
}

.abc {
    font: bold 11px "Open Sans", sans-serif;
    fill: #1c3850;
    text-anchor: middle;
}

.ab {
    font: bold 13px "Liberation Sans", sans-serif;
    fill: #222;
}

.help-mark {
    font: bold 19px "Liberation Sans", sans-serif;
    fill: #fff;
    text-anchor: middle;
}

.letter {
    font-size: 26px;
    color: #1e3c54;
}

.bold {
    font-weight: bold;
}

.italic {
    font-family: "Liberation Serif", serif;
    font-style: italic;
    font-weight: bold;
}

.letter u {
    text-underline-offset: 3px;
    text-decoration-thickness: 2px;
}

.blue {
    fill: #8fc4e4;
    stroke: #1d4a6c;
    stroke-width: 1.5px;
}

.flip {
    transform: rotate(180deg);
    transform-origin: 12px 12px;
}

.white {
    fill: #fff;
    stroke: #222;
    stroke-width: 1.5px;
}

.white .sub {
    fill: #6ab4ec;
    stroke: #14508c;
    stroke-width: 2px;
}

.lines {
    fill: none;
    stroke: #1c2430;
    stroke-width: 1.5px;
}

.combo {
    position: relative;
    height: 34px;
    border: 1px solid #9aa0ac;
    background: #fff;
}

.combo select,
.combo input {
    appearance: none;
    width: 100%;
    height: 100%;
    padding: 0 28px 0 5px;
    border: none;
    border-radius: 0;
    background: none;
    font: inherit;
    color: #111;
}

.combo input::placeholder {
    color: #777;
}

.combo-arrow {
    position: absolute;
    top: 2px;
    right: 2px;
    bottom: 2px;
    width: 24px;
    display: flex;
    align-items: center;
    justify-content: center;
    border: 1px solid #555a62;
    background: linear-gradient(#f4f4f6, #cdced2);
    box-shadow: inset 0 0 0 1px #fff;
    pointer-events: none;
}

.combo-arrow::before {
    content: "";
    width: 11px;
    height: 7px;
    background: #111;
    clip-path: polygon(0 0, 100% 0, 50% 100%);
}

.combo.style {
    width: 195px;
    margin: 0 12px 0 11px;
}

.combo.font {
    width: 220px;
    margin-right: 12px;
}

.combo.size {
    width: 88px;
    margin-right: 11px;
}

.combo.find {
    width: 142px;
}

/* Work area */
.workspace {
    position: relative;
    flex: 1;
    min-height: 0;
    display: grid;
    grid-template-columns: 37px 1fr 27px;
    grid-template-rows: 38px minmax(0, 1fr) 28px;
    border-top: 3px solid #8b8e96;
    border-left: 2px solid #8b8e96;
    background: #f0f0f0;
}

.ruler-row {
    grid-column: 1 / 3;
    display: flex;
    padding-top: 4px;
}

.tab-type {
    width: 26px;
    height: 27px;
    margin: 0 6px 0 5px;
    border: 1px solid #8d8d8d;
    background: #fafafa;
}

.tab-type::before {
    content: "";
    display: block;
    width: 10px;
    height: 9px;
    margin: 4px 0 0 7px;
    border-left: 3px solid #000;
    border-bottom: 3px solid #000;
}

.ruler-holder {
    flex: 1;
    display: flex;
    justify-content: center;
    padding-left: 2px;
}

.ruler-h {
    width: 1132px;
    height: 27px;
    overflow: visible;
}

.ruler-h text,
.ruler-v text {
    font: 17px "Open Sans", sans-serif;
    text-anchor: middle;
    fill: #111;
}

.active {
    fill: #fff;
}

.margin {
    fill: #f0f0f0;
    stroke: #9c9c9c;
    stroke-width: 2px;
}

.tab {
    fill: none;
    stroke: #111;
    stroke-width: 2px;
}

.indent {
    fill: #eee;
    stroke: #555;
    stroke-width: 1.5px;
}

.side-ruler {
    overflow: hidden;
    padding: 58px 0 0 5px;
}

.ruler-v {
    width: 26px;
    height: 732px;
    display: block;
}

.canvas {
    overflow: hidden;
    display: flex;
    justify-content: center;
    padding-top: 55px;
    border-top: 2px solid #111;
    border-left: 2px solid #111;
    background: #ababab;
}

.page {
    width: 1136px;
    height: 1600px;
    flex: none;
    padding: 144px 137px 0 137px;
    border: 1px solid #111;
    border-left-width: 2px;
    background: #fff;
    box-shadow: 4px 4px 0 #0c0c10;
}

/* Document text */
.text-frame {
    height: 1400px;
    border: 1px solid #bdbdbd;
    font-family: "Liberation Serif", serif;
    font-size: 23px;
    line-height: 28px;
}

.text-frame p {
    white-space: pre-wrap;
}

.text-frame .college {
    font-size: 27px;
    font-weight: bold;
    line-height: 30px;
    text-align: center;
    white-space: nowrap;
}

.head {
    font-weight: bold;
    text-align: center;
}

.tall {
    line-height: 30px;
}

.short {
    line-height: 27px;
}

.misspelt {
    text-decoration: underline wavy #e02020 1px;
    text-decoration-skip-ink: none;
}

.semester {
    display: flex;
    justify-content: center;
    gap: 54px;
    font-size: 19px;
    font-weight: bold;
    line-height: 23px;
}

.course {
    display: flex;
    justify-content: center;
    gap: 28px;
    line-height: 26px;
}

.admitted {
    font-style: italic;
    text-align: center;
}

.hours {
    display: flex;
    justify-content: space-between;
    padding-right: 36px;
    font-size: 19px;
    font-weight: bold;
    font-style: italic;
    line-height: 29px;
}

.text-frame h3 {
    margin-top: 28px;
    font-weight: bold;
}

.body-text {
    line-height: 26px;
}

.objectives li {
    display: flex;
    height: 29px;
    line-height: 28px;
}

.num {
    width: 76px;
    margin-right: 35px;
    text-align: right;
    font-family: "Liberation Mono", monospace;
    font-size: 18px;
}

.link {
    color: #1c4496;
    text-underline-offset: 3px;
    text-decoration-skip-ink: none;
}

.selected {
    height: 28px;
    background: #cce4fb;
    outline: 1px solid #3c90e0;
}

.wide {
    font-family: "DejaVu Sans", sans-serif;
    font-weight: 200;
    font-size: 23px;
}

.components {
    display: grid;
    grid-template-columns: 481px 1fr;
    margin: 27px 0 0 68px;
    line-height: 27px;
}

/* Scroll bars */
.scroll-v {
    grid-column: 3;
    grid-row: 1 / 3;
    display: flex;
    flex-direction: column;
    align-items: center;
    gap: 3px;
    background: linear-gradient(90deg, #e8e8ea, #f5f4f6);
    border-right: 4px solid #e4e6ea;
}

.scroll-space {
    flex: 1;
}

.arrow {
    width: 20px;
    height: 22px;
    display: flex;
    align-items: center;
    justify-content: center;
}

.arrow::before {
    content: "";
    width: 10px;
    height: 7px;
    background: #3c3c40;
    clip-path: polygon(0 0, 100% 0, 50% 100%);
}

.arrow.up::before {
    clip-path: polygon(50% 0, 100% 100%, 0 100%);
}

.arrow.left::before {
    width: 7px;
    height: 11px;
    clip-path: polygon(100% 0, 100% 100%, 0 50%);
}

.arrow.right::before {
    width: 7px;
    height: 11px;
    clip-path: polygon(0 0, 100% 50%, 0 100%);
}

.nav-btn {
    width: 21px;
    height: 22px;
    border: 1px solid #777;
    border-radius: 4px;
    background: linear-gradient(#fff, #dcdcde);
}

.nav-btn svg {
    width: 18px;
    height: 20px;
    display: block;
    margin: auto;
}

.scroll-h {
    grid-column: 1 / 4;
    display: flex;
    align-items: center;
    gap: 3px;
    padding: 0 30px 0 3px;
    background: #f1f0f2;
    border-bottom: 1px solid #fff;
}

.thumb {
    flex: 1;
    height: 23px;
    display: flex;
    align-items: center;
    justify-content: center;
    border: 1px solid #8c8b90;
    border-radius: 2px;
    background: linear-gradient(#f1f0f2 45%, #d0cfd3 55%, #c3c2c6);
}

.thumb span {
    width: 10px;
    height: 11px;
    background: repeating-linear-gradient(90deg, #66666c 0 2px, transparent 2px 4px);
}

/* Floating styles window */
.styles-panel {
    position: absolute;
    top: 17px;
    right: 6px;
    width: 362px;
    padding: 0 8px 8px;
    border: 1px solid #5c6b7c;
    background: linear-gradient(#eef6fc, #b9cfe4 35px, #c3d6e8 60%, #dfeaf4);
    box-shadow: inset 0 0 0 1px #f2f9fd;
}

.panel-title {
    height: 36px;
    display: flex;
    align-items: center;
    justify-content: space-between;
    padding-left: 2px;
}

.panel-close {
    width: 24px;
    height: 25px;
    border: 1px solid #4d5c6c;
    border-radius: 3px;
    background: linear-gradient(#e8f1f8, #b8c8d8);
}

.panel-close svg {
    width: 18px;
    height: 18px;
    display: block;
    margin: auto;
}

.panel-body {
    padding: 6px;
    border: 1px solid #4d5866;
    background: #f0f0f1;
}

.panel-tools {
    display: flex;
    height: 38px;
    align-items: center;
    margin-bottom: 6px;
}

.panel-tools .tool.pressed {
    background: linear-gradient(#c0c0c3, #e2e2e4 30%, #e6e6e8);
}

.spacer {
    flex: 1;
}

.gray {
    filter: grayscale(1);
    opacity: 0.35;
}

.style-list {
    height: 511px;
    border: 1px solid #7d8794;
    background: #fff;
    padding: 1px 3px;
}

.style-list ul {
    height: 450px;
    display: grid;
    grid-auto-rows: 1fr;
    align-items: center;
    line-height: 22px;
}

.combo.filter {
    margin-top: 6px;
    height: 33px;
}

.combo.filter select {
    padding-left: 3px;
}

/* Status bar */
.statusbar {
    height: 34px;
    flex: none;
    display: grid;
    grid-template-columns: 326fr 290fr 336fr 65px 49px 23px 41px 446fr 109px 204px 61px;
    align-items: center;
    padding-top: 2px;
    background: #f1f0f2;
    border-bottom: 1px solid #c8c8cc;
}

.statusbar > span {
    height: 25px;
    padding-left: 6px;
    line-height: 26px;
    border-left: 1px solid #a2a2a6;
    white-space: nowrap;
}

.statusbar > span:first-child {
    padding-left: 13px;
    border-left: none;
}

.statusbar > .center {
    padding-left: 0;
    text-align: center;
}

.statusbar > .modified {
    padding-left: 3px;
}

.statusbar svg {
    width: 16px;
    height: 20px;
    display: block;
}

.statusbar .double {
    width: 28px;
}

.statusbar .views {
    display: flex;
    align-items: center;
    gap: 6px;
    padding-left: 9px;
}

.statusbar .zoom {
    display: flex;
    align-items: center;
    gap: 6px;
}

.zoom .round svg {
    width: 18px;
}

.zoom input {
    appearance: none;
    width: 139px;
    height: 20px;
    margin: 0;
    background: linear-gradient(#85858a, #85858a) 0 50% / 100% 2px no-repeat, linear-gradient(#85858a, #85858a) 16% 50% / 1px 18px no-repeat;
}

.zoom input::-webkit-slider-thumb {
    appearance: none;
    width: 12px;
    height: 15px;
    border: 2px solid #2c5270;
    border-radius: 50%;
    background: #6da4c8;
}
```
